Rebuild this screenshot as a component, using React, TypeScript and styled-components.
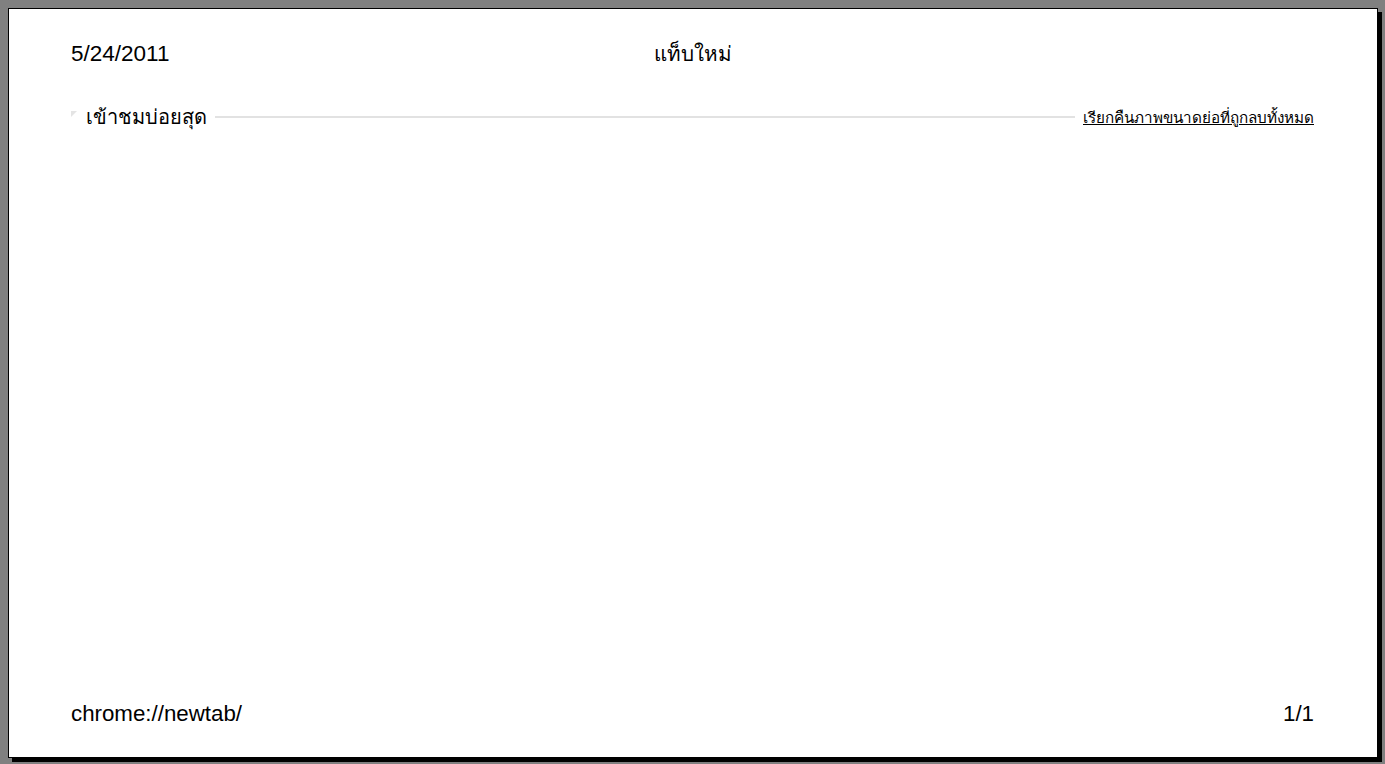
import React from 'react';
import styled, { createGlobalStyle } from 'styled-components';

const GlobalStyle = createGlobalStyle`
  html, body {
    margin: 0;
    padding: 0;
    background: #808080;
  }
  body {
    padding: 8px;
    font-family: "Liberation Sans", "DejaVu Sans", sans-serif;
    color: #000;
  }
`;

const Sheet = styled('div')({
  boxSizing: 'border-box',
  width: '1370px',
  height: '750px',
  border: '1px solid #000',
  background: '#fff',
  boxShadow: '4px 4px 0 #000',
  padding: '0 63px 0 62px',
  display: 'flex',
  flexDirection: 'column',
});

const PrintHeader = styled('header')({
  display: 'grid',
  gridTemplateColumns: '1fr auto 1fr',
  alignItems: 'center',
  height: '25px',
  marginTop: '32px',
  fontSize: '22.5px',
  lineHeight: '25px',
});

const PageTitle = styled('div')({
  fontFamily: '"Noto Sans", "DejaVu Sans", sans-serif',
  fontSize: '20.6px',
  textAlign: 'center',
});

const SectionBar = styled('div')({
  display: 'flex',
  alignItems: 'center',
  marginTop: '39px',
  height: '24px',
  gap: '8px',
});

const Disclosure = styled('span')({
  display: 'block',
  width: '0',
  height: '0',
  borderTop: '3px solid #e4e4e4',
  borderLeft: '3px solid #e4e4e4',
  borderRight: '3px solid transparent',
  borderBottom: '3px solid transparent',
  marginRight: '1px',
  marginTop: '-6px',
});

const SectionTitle = styled('span')({
  fontFamily: '"Noto Sans", "DejaVu Sans", sans-serif',
  fontSize: '20px',
  whiteSpace: 'nowrap',
});

const Rule = styled('span')({
  flex: 1,
  height: '2px',
  background: '#e2e2e2',
});

const RestoreLink = styled('a')({
  fontFamily: '"Noto Sans", "DejaVu Sans", sans-serif',
  fontSize: '15.25px',
  color: '#000',
  textDecoration: 'underline',
  whiteSpace: 'nowrap',
  cursor: 'pointer',
});

const Body = styled('main')({
  flex: 1,
});

const PrintFooter = styled('footer')({
  display: 'flex',
  justifyContent: 'space-between',
  alignItems: 'center',
  height: '25px',
  marginBottom: '31px',
  fontSize: '22.3px',
  lineHeight: '25px',
});

const App = (): JSX.Element => {
  return (
    <>
      <GlobalStyle />
      <Sheet>
        <PrintHeader>
          <div>5/24/2011</div>
          <PageTitle>แท็บใหม่</PageTitle>
          <div />
        </PrintHeader>
        <SectionBar>
          <Disclosure />
          <SectionTitle>เข้าชมบ่อยสุด</SectionTitle>
          <Rule />
          <RestoreLink>เรียกคืนภาพขนาดย่อที่ถูกลบทั้งหมด</RestoreLink>
        </SectionBar>
        <Body />
        <PrintFooter>
          <span>chrome://newtab/</span>
          <span>1/1</span>
        </PrintFooter>
      </Sheet>
    </>
  );
};

export default App;
